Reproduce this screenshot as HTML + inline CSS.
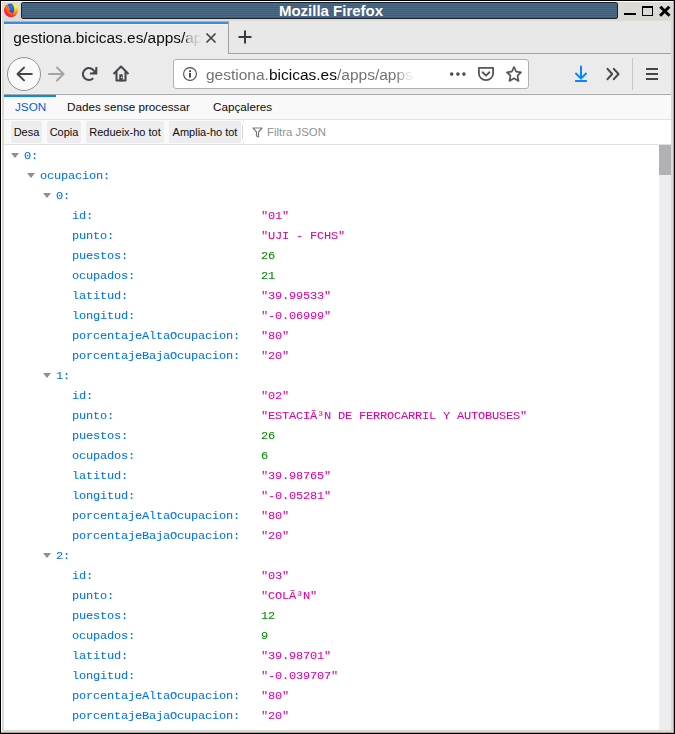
<!DOCTYPE html>
<html><head><meta charset="utf-8">
<style>
*{margin:0;padding:0;box-sizing:border-box}
html,body{width:675px;height:734px;overflow:hidden;background:#dcdad5;position:relative;font-family:"Liberation Sans",sans-serif}
.a{position:absolute}
.k,.v{position:absolute;font-family:"Liberation Mono",monospace;font-size:12px;letter-spacing:-0.2px;line-height:20px;white-space:pre;color:#0074e8;transform:scaleY(0.9);transform-origin:0 14px;-webkit-text-stroke:0.07px currentColor}
.v.s{color:#dd00a9}
.v.n{color:#058b00}
.tw{position:absolute;width:0;height:0;border-left:4px solid transparent;border-right:4px solid transparent;border-top:5px solid #8f8f8f}
.btn{position:absolute;top:121px;height:22px;background:#ededf0;border-radius:2px;font-size:11px;line-height:22px;color:#0c0c0d;text-align:center}
svg{position:absolute;overflow:visible}
</style></head><body>
<!-- window frame -->
<div class="a" style="left:0;top:0;width:675px;height:1px;background:#000"></div>
<div class="a" style="left:0;top:0;width:1px;height:734px;background:#000"></div>
<div class="a" style="left:674px;top:0;width:1px;height:734px;background:#000"></div>
<div class="a" style="left:0;top:733px;width:675px;height:1px;background:#000"></div>
<div class="a" style="left:1px;top:1px;width:673px;height:1px;background:#fff"></div>
<div class="a" style="left:1px;top:1px;width:1px;height:732px;background:#fff"></div>
<div class="a" style="left:673px;top:1px;width:1px;height:732px;background:#aaa69d"></div>
<div class="a" style="left:1px;top:732px;width:673px;height:1px;background:#aaa69d"></div>

<!-- firefox logo -->
<svg style="left:4px;top:3px" width="14" height="14" viewBox="0 0 14 14">
 <defs>
  <radialGradient id="ffo" cx="0.8" cy="0.22" r="0.95">
   <stop offset="0" stop-color="#fff44f"/><stop offset="0.25" stop-color="#ffcc00"/><stop offset="0.5" stop-color="#ff8410"/><stop offset="0.78" stop-color="#ff2a2a"/><stop offset="1" stop-color="#d8157a"/>
  </radialGradient>
  <linearGradient id="ffb" x1="0" y1="0" x2="0.2" y2="1">
   <stop offset="0" stop-color="#4a3ec0"/><stop offset="0.35" stop-color="#0a84ff"/><stop offset="0.75" stop-color="#1a5fe0"/><stop offset="1" stop-color="#4b3aa8"/>
  </linearGradient>
 </defs>
 <circle cx="7" cy="7.3" r="6.9" fill="url(#ffo)"/>
 <path d="M3.9 1.3 C5.5 0.6 7.4 0.7 8.3 1 C9.6 2.2 10.3 4.2 10.2 6.5 C10 8.8 9.1 10.4 7.9 11 C8.1 10.2 7.8 9.6 7 9.4 C6 9.2 5.2 8.8 4.8 7.7 C5.6 7.3 6 6.6 5.6 5.7 C5 4.6 4.1 3 3.9 1.3Z" fill="url(#ffb)"/>
 <path d="M1.9 2.2 C2.6 2.6 3.3 2.2 3.9 1.3 C4.1 3 5 4.6 5.6 5.7 C6 6.6 5.6 7.3 4.8 7.7 C5.2 8.8 6 9.2 7 9.4 C6.8 10.3 5.4 10.6 4.2 10 C2.8 9 1.8 7 1.5 4.5 C1.5 3.6 1.6 2.8 1.9 2.2Z" fill="#ff6414"/>
 <path d="M8.3 1 C8.8 0.5 9.1 0.2 9.4 0.3 C12 1.2 13.8 3.6 13.9 6.5 C13 4.5 11.8 3.3 10.6 3.2 C9.7 2.6 8.9 1.7 8.3 1Z" fill="#ffe83a"/>
</svg>
<!-- title bar -->
<div class="a" style="left:21px;top:2px;width:597px;height:17px;border:1px solid #16222c;border-radius:2px;background:repeating-linear-gradient(#435e79 0 1px,#4b6885 1px 2px)"></div>
<div class="a" style="left:22px;top:3px;width:595px;height:1px;background:#486481"></div>
<div class="a" style="left:230.5px;top:1px;width:201px;text-align:center;color:#fff;font-weight:bold;font-size:15px;line-height:19px">Mozilla Firefox</div>
<!-- window controls -->
<div class="a" style="left:624px;top:13px;width:12px;height:2px;background:#000"></div>
<div class="a" style="left:642px;top:6px;width:11px;height:10px;border:1px solid #000;border-top-width:2px"></div>
<svg style="left:655px;top:3px" width="18" height="15" viewBox="0 0 18 15"><path d="M5.3 3.8 L14.5 12.8 M14.3 3.8 L5.1 12.8" stroke="#000" stroke-width="3"/></svg>

<!-- content bg -->
<div class="a" style="left:4px;top:21px;width:667px;height:709px;background:#e8e8e8"></div>

<!-- tab strip -->
<div class="a" style="left:4px;top:21px;width:224px;height:1px;background:#b8b2aa"></div>
<div class="a" style="left:4px;top:22px;width:224px;height:33px;background:#ebebeb"></div>
<div class="a" style="left:4px;top:22px;width:224px;height:2px;background:#3d89dc"></div>
<div class="a" style="left:4px;top:24px;width:224px;height:1px;background:#f3f2ef"></div>
<div class="a" style="left:228px;top:21px;width:1px;height:33px;background:#a0a0a0"></div>
<div class="a" style="left:228px;top:53px;width:443px;height:1px;background:#a0a0a0"></div>
<div class="a" style="left:13.3px;top:28px;width:188px;height:20px;overflow:hidden;white-space:nowrap;font-size:15.4px;line-height:20px;color:#0c0c0d;-webkit-mask-image:linear-gradient(90deg,#000 173px,rgba(0,0,0,0.35) 175px,rgba(0,0,0,0.1) 186px,transparent 188px)">gestiona.bicicas.es/apps/apps</div>
<svg style="left:205px;top:32px" width="12" height="12" viewBox="0 0 12 12"><path d="M1.5 1.5 L10.5 10.5 M10.5 1.5 L1.5 10.5" stroke="#434347" stroke-width="1.7"/></svg>
<svg style="left:238px;top:30px" width="14" height="14" viewBox="0 0 14 14"><path d="M7 0.5 V13.5 M0.5 7 H13.5" stroke="#3b3b3b" stroke-width="2"/></svg>

<!-- nav bar -->
<div class="a" style="left:4px;top:54px;width:667px;height:39px;background:#ebebeb"></div>
<div class="a" style="left:4px;top:93px;width:667px;height:1px;background:#efefef"></div>
<div class="a" style="left:4px;top:94px;width:667px;height:1px;background:#a8a8a8"></div>
<!-- back -->
<div class="a" style="left:7px;top:57px;width:34px;height:34px;border-radius:50%;background:#f9f9f9;border:1px solid #909090"></div>
<svg style="left:14.5px;top:66px" width="18" height="16" viewBox="0 0 18 16"><path d="M9 1.6 L2.5 8 L9 14.4 M2.5 8 H16.8" stroke="#45454a" stroke-width="2" fill="none" stroke-linecap="round" stroke-linejoin="round"/></svg>
<!-- forward -->
<svg style="left:48px;top:66px" width="18" height="16" viewBox="0 0 18 16"><path d="M9 1.5 L15.5 8 L9 14.5 M15.5 8 H1" stroke="#a4a4a4" stroke-width="2" fill="none" stroke-linecap="round" stroke-linejoin="round"/></svg>
<!-- reload -->
<svg style="left:80px;top:65px" width="18" height="18" viewBox="0 0 18 18"><path d="M14.2 6.3 A6 6 0 1 0 13.2 13.2" stroke="#45454a" stroke-width="2" fill="none"/><path d="M16.3 2 V8.5 H10" stroke="#45454a" stroke-width="2" fill="none"/><path d="M16.3 4 V8.5 H11.8 Z" fill="#45454a"/></svg>
<!-- home -->
<svg style="left:112px;top:65px" width="18" height="18" viewBox="0 0 18 18"><path d="M1.5 9 L9 1.5 L16.5 9 M4.5 6.5 V15.5 H13.5 V6.5" stroke="#45454a" stroke-width="2" fill="none" stroke-linejoin="round"/><rect x="7.3" y="9.3" width="3.4" height="7" fill="#45454a"/><circle cx="9.4" cy="12.4" r="0.6" fill="#ebebeb"/></svg>
<!-- url bar -->
<div class="a" style="left:173px;top:59px;width:356px;height:30px;background:#fff;border:1px solid #b1b1b1;border-radius:3px"></div>
<svg style="left:182px;top:66px" width="16" height="16" viewBox="0 0 16 16"><circle cx="8" cy="8" r="6.4" stroke="#4a4a4a" stroke-width="1.1" fill="none"/><rect x="7" y="4.3" width="2" height="1.8" fill="#4a4a4a"/><rect x="7" y="7" width="2" height="4.6" fill="#4a4a4a"/></svg>
<div class="a" style="left:206px;top:65px;width:214px;height:20px;overflow:hidden;white-space:nowrap;font-size:15.5px;line-height:20px;color:#737373;-webkit-mask-image:linear-gradient(90deg,#000 190px,rgba(0,0,0,0.3) 200px,transparent 210px)">gestiona.<span style="color:#0c0c0d">bicicas.es</span>/apps/apps</div>
<svg style="left:449px;top:72px" width="18" height="5" viewBox="0 0 18 5"><circle cx="2.7" cy="2.1" r="1.8" fill="#4d4d4d"/><circle cx="8.9" cy="2.1" r="1.8" fill="#4d4d4d"/><circle cx="14.9" cy="2.1" r="1.8" fill="#4d4d4d"/></svg>
<svg style="left:477px;top:66px" width="18" height="16" viewBox="0 0 18 16"><path d="M1.9 1.9 H16.1 V7.4 A7.1 6.7 0 0 1 1.9 7.4 Z" stroke="#555" stroke-width="1.8" fill="none" stroke-linejoin="round"/><path d="M5.6 6.3 L9 9.6 L12.4 6.3" stroke="#555" stroke-width="1.9" fill="none" stroke-linecap="round" stroke-linejoin="round"/></svg>
<svg style="left:505px;top:65px" width="18" height="18" viewBox="0 0 18 18"><path d="M9 2 L11.2 6.6 L16 7.3 L12.5 10.7 L13.5 15.9 L9 13.3 L4.5 15.9 L5.5 10.7 L2 7.3 L6.8 6.6 Z" stroke="#555" stroke-width="1.7" fill="none" stroke-linejoin="round"/></svg>
<!-- download -->
<svg style="left:573px;top:65px" width="16" height="18" viewBox="0 0 16 18"><path d="M8 1.5 V13 M3 8.5 L8 13.5 L13 8.5" stroke="#0a84ff" stroke-width="2" fill="none" stroke-linecap="round" stroke-linejoin="round"/><rect x="2" y="15" width="12" height="2" rx="0.5" fill="#0a84ff"/></svg>
<svg style="left:605px;top:67px" width="16" height="14" viewBox="0 0 16 14"><path d="M2.5 1.8 L7.2 7 L2.5 12.2 M8.8 1.8 L13.5 7 L8.8 12.2" stroke="#45454a" stroke-width="2" fill="none" stroke-linecap="round" stroke-linejoin="round"/></svg>
<div class="a" style="left:632px;top:58px;width:1px;height:32px;background:#c8c8c8"></div>
<div class="a" style="left:646px;top:68px;width:12px;height:2px;background:#45454a"></div>
<div class="a" style="left:646px;top:73px;width:12px;height:2px;background:#45454a"></div>
<div class="a" style="left:646px;top:78px;width:12px;height:2px;background:#45454a"></div>

<!-- json viewer tabs -->
<div class="a" style="left:4px;top:95px;width:667px;height:24px;background:#f9f9fa"></div>
<div class="a" style="left:4px;top:95px;width:52px;height:2px;background:#0a84ff"></div>
<div class="a" style="left:4px;top:119px;width:667px;height:1px;background:#e0e0e2"></div>
<div class="a" style="left:15px;top:99px;font-size:11.7px;line-height:16px;color:#0062e0">JSON</div>
<div class="a" style="left:67px;top:99px;font-size:11.7px;line-height:16px;color:#0c0c0d">Dades sense processar</div>
<div class="a" style="left:213px;top:99px;font-size:11.7px;line-height:16px;color:#0c0c0d">Capçaleres</div>
<!-- toolbar -->
<div class="a" style="left:4px;top:120px;width:667px;height:24px;background:#f9f9fa"></div>
<div class="a" style="left:244px;top:120px;width:427px;height:24px;background:#fff"></div>
<div class="a" style="left:4px;top:144px;width:667px;height:1px;background:#e0e0e2"></div>
<div class="btn" style="left:11px;width:31px">Desa</div>
<div class="btn" style="left:47px;width:34px">Copia</div>
<div class="btn" style="left:86px;width:78px">Redueix-ho tot</div>
<div class="btn" style="left:169px;width:72px">Amplia-ho tot</div>
<div class="a" style="left:242px;top:125px;width:1px;height:14px;background:#d7d7db"></div>
<svg style="left:252px;top:127px" width="11" height="11" viewBox="0 0 11 11"><path d="M1 1 H10 L6.5 5 V10 L4.5 9 V5 Z" stroke="#7a7a7a" stroke-width="1.2" fill="none" stroke-linejoin="round"/></svg>
<div class="a" style="left:267px;top:124px;font-size:11.4px;line-height:16px;color:#8f8f95">Filtra JSON</div>

<!-- json content -->
<div class="a" style="left:4px;top:145px;width:655px;height:585px;background:#fff"></div>
<div class="a" style="left:659px;top:145px;width:12px;height:585px;background:#ededf0"></div>
<div class="a" style="left:659px;top:145px;width:12px;height:30px;background:#b1b1b3"></div>
<div class="tw" style="left:11px;top:153px"></div>
<div class="k" style="left:24px;top:146px">0:</div>
<div class="tw" style="left:27px;top:173px"></div>
<div class="k" style="left:40px;top:166px">ocupacion:</div>
<div class="tw" style="left:43px;top:193px"></div>
<div class="k" style="left:56px;top:186px">0:</div>
<div class="k" style="left:72px;top:206px">id:</div>
<div class="v s" style="left:261px;top:206px">"01"</div>
<div class="k" style="left:72px;top:226px">punto:</div>
<div class="v s" style="left:261px;top:226px">"UJI - FCHS"</div>
<div class="k" style="left:72px;top:246px">puestos:</div>
<div class="v n" style="left:261px;top:246px">26</div>
<div class="k" style="left:72px;top:266px">ocupados:</div>
<div class="v n" style="left:261px;top:266px">21</div>
<div class="k" style="left:72px;top:286px">latitud:</div>
<div class="v s" style="left:261px;top:286px">"39.99533"</div>
<div class="k" style="left:72px;top:306px">longitud:</div>
<div class="v s" style="left:261px;top:306px">"-0.06999"</div>
<div class="k" style="left:72px;top:326px">porcentajeAltaOcupacion:</div>
<div class="v s" style="left:261px;top:326px">"80"</div>
<div class="k" style="left:72px;top:346px">porcentajeBajaOcupacion:</div>
<div class="v s" style="left:261px;top:346px">"20"</div>
<div class="tw" style="left:43px;top:373px"></div>
<div class="k" style="left:56px;top:366px">1:</div>
<div class="k" style="left:72px;top:386px">id:</div>
<div class="v s" style="left:261px;top:386px">"02"</div>
<div class="k" style="left:72px;top:406px">punto:</div>
<div class="v s" style="left:261px;top:406px">"ESTACIÃ³N DE FERROCARRIL Y AUTOBUSES"</div>
<div class="k" style="left:72px;top:426px">puestos:</div>
<div class="v n" style="left:261px;top:426px">26</div>
<div class="k" style="left:72px;top:446px">ocupados:</div>
<div class="v n" style="left:261px;top:446px">6</div>
<div class="k" style="left:72px;top:466px">latitud:</div>
<div class="v s" style="left:261px;top:466px">"39.98765"</div>
<div class="k" style="left:72px;top:486px">longitud:</div>
<div class="v s" style="left:261px;top:486px">"-0.05281"</div>
<div class="k" style="left:72px;top:506px">porcentajeAltaOcupacion:</div>
<div class="v s" style="left:261px;top:506px">"80"</div>
<div class="k" style="left:72px;top:526px">porcentajeBajaOcupacion:</div>
<div class="v s" style="left:261px;top:526px">"20"</div>
<div class="tw" style="left:43px;top:553px"></div>
<div class="k" style="left:56px;top:546px">2:</div>
<div class="k" style="left:72px;top:566px">id:</div>
<div class="v s" style="left:261px;top:566px">"03"</div>
<div class="k" style="left:72px;top:586px">punto:</div>
<div class="v s" style="left:261px;top:586px">"COLÃ³N"</div>
<div class="k" style="left:72px;top:606px">puestos:</div>
<div class="v n" style="left:261px;top:606px">12</div>
<div class="k" style="left:72px;top:626px">ocupados:</div>
<div class="v n" style="left:261px;top:626px">9</div>
<div class="k" style="left:72px;top:646px">latitud:</div>
<div class="v s" style="left:261px;top:646px">"39.98701"</div>
<div class="k" style="left:72px;top:666px">longitud:</div>
<div class="v s" style="left:261px;top:666px">"-0.039707"</div>
<div class="k" style="left:72px;top:686px">porcentajeAltaOcupacion:</div>
<div class="v s" style="left:261px;top:686px">"80"</div>
<div class="k" style="left:72px;top:706px">porcentajeBajaOcupacion:</div>
<div class="v s" style="left:261px;top:706px">"20"</div>
</body></html>
